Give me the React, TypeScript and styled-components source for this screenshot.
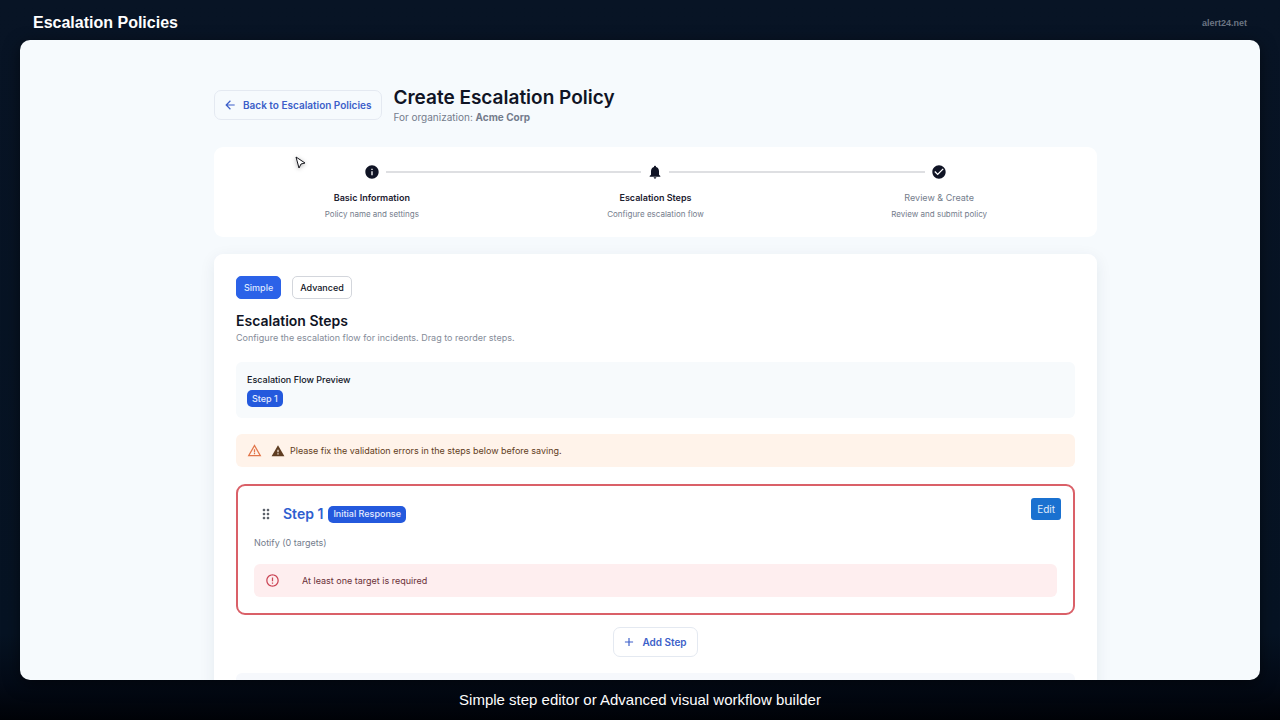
import React from 'react';
import styled, { createGlobalStyle } from 'styled-components';
import {
  MdAdd,
  MdArrowBack,
  MdCheckCircle,
  MdDragIndicator,
  MdErrorOutline,
  MdInfo,
  MdNotifications,
  MdWarning,
  MdWarningAmber,
} from 'react-icons/md';

const GlobalStyle = createGlobalStyle`
  *, *::before, *::after { box-sizing: border-box; }
  body {
    margin: 0;
    background: #061121;
    font-family: Inter, 'Liberation Sans', sans-serif;
    color: #101425;
  }
  h1, h2, h3, p, ol { margin: 0; padding: 0; }
  button { font-family: inherit; cursor: pointer; }
  svg { display: block; flex: none; }
`;

const Shell = styled.div`
  height: 100vh;
  display: flex;
  flex-direction: column;
  padding: 0 20px;
  background: linear-gradient(180deg, #081425 0%, #061323 88%, #030a16 95%, #000207 100%);
  font-family: 'Liberation Sans', Arial, sans-serif;
`;

const TopBar = styled.header`
  flex: none;
  height: 40px;
  padding: 5px 13px 0;
  display: flex;
  align-items: center;
  justify-content: space-between;
`;

const SceneTitle = styled.h1`
  font-size: 16px;
  line-height: 20px;
  font-weight: 700;
  color: #fff;
`;

const SiteLink = styled.a`
  font-size: 9px;
  line-height: 12px;
  font-weight: 700;
  color: #6b7482;
  text-decoration: none;
`;

const Caption = styled.footer`
  flex: none;
  height: 40px;
  display: flex;
  align-items: center;
  justify-content: center;
  font-size: 15px;
  line-height: 20px;
  color: #fff;
`;

const Viewport = styled.main`
  position: relative;
  flex: 1;
  min-height: 0;
  overflow: hidden;
  padding: 45px 16px 0 47px;
  border-radius: 10px;
  background: #f6fafd;
  box-shadow: 0 4px 16px rgba(0, 0, 0, 0.5);
  font-family: Inter, 'Liberation Sans', sans-serif;
`;

const Column = styled.div`
  max-width: 883px;
  margin: 0 auto;
`;

const PageHeader = styled.div`
  display: flex;
  align-items: center;
  gap: 11px;
  margin-bottom: 23px;
`;

const OutlineButton = styled.button`
  display: flex;
  align-items: center;
  gap: 6px;
  height: 30px;
  padding: 0 10px 0 8px;
  border: 1px solid #e4e9f1;
  border-radius: 7px;
  background: transparent;
  color: #3c5fc9;
  font-size: 10px;
  line-height: 16px;
  font-weight: 600;
`;

const PageTitle = styled.h2`
  font-size: 19px;
  line-height: 25px;
  font-weight: 600;
`;

const Organization = styled.p`
  font-size: 10px;
  line-height: 14px;
  color: #747c8c;
`;

const StepperCard = styled.ol`
  display: grid;
  grid-template-columns: repeat(3, 1fr);
  height: 90px;
  padding: 17px 16px 15px;
  margin-bottom: 17px;
  border-radius: 9px;
  background: #fff;
  list-style: none;
`;

const StepItem = styled.li<{ $pending?: boolean }>`
  display: grid;
  grid-template-columns: 1fr 16px 1fr;
  grid-template-rows: 16px 20px 12px;
  column-gap: 6px;
  row-gap: 4px;
  align-items: center;
  justify-items: center;
  text-align: center;
  color: ${(p) => (p.$pending ? '#747c8c' : '#1d2130')};
  font-weight: ${(p) => (p.$pending ? 400 : 600)};
`;

const Connector = styled.span<{ $hidden?: boolean }>`
  width: 100%;
  height: 2px;
  background: ${(p) => (p.$hidden ? 'transparent' : '#dedfe2')};
`;

const StepIcon = styled.span`
  color: #101425;
`;

const StepLabel = styled.span`
  grid-column: 1 / -1;
  align-self: end;
  font-size: 9px;
  line-height: 12px;
`;

const StepHint = styled.span`
  grid-column: 1 / -1;
  font-size: 8px;
  line-height: 12px;
  font-weight: 400;
  color: #747c8c;
`;

const EditorCard = styled.section`
  padding: 22px 22px 40px;
  border-radius: 9px;
  background: #fff;
  box-shadow: 0 4px 16px rgba(30, 50, 80, 0.08);
`;

const ModeSwitch = styled.div`
  display: flex;
  gap: 11px;
  margin-bottom: 12px;
`;

const ModeButton = styled.button<{ $active?: boolean }>`
  height: 23px;
  padding: 0 7px;
  border: 1px solid ${(p) => (p.$active ? '#2b62e8' : '#d3d6dc')};
  border-radius: 5px;
  background: ${(p) => (p.$active ? '#2b62e8' : '#fff')};
  color: ${(p) => (p.$active ? '#dfe8ff' : '#101425')};
  font-size: 9px;
  line-height: 12px;
  font-weight: 500;
`;

const SectionTitle = styled.h3`
  font-size: 14px;
  line-height: 19px;
  font-weight: 600;
`;

const SectionHint = styled.p`
  margin-bottom: 16px;
  font-size: 9px;
  line-height: 16px;
  color: #858c99;
`;

const Preview = styled.div`
  display: flex;
  flex-direction: column;
  align-items: flex-start;
  gap: 4px;
  height: 56px;
  margin-bottom: 16px;
  padding: 11px;
  border-radius: 6px;
  background: #f7fafc;
`;

const PreviewTitle = styled.p`
  font-size: 9px;
  line-height: 13px;
  font-weight: 500;
`;

const Chip = styled.span`
  display: inline-flex;
  align-items: center;
  height: 17px;
  padding: 0 5px;
  border-radius: 5px;
  background: #2459dd;
  color: #e3ebff;
  font-size: 9px;
  line-height: 12px;
  font-weight: 500;
`;

const Alert = styled.div<{ $tone: 'warning' | 'error' }>`
  display: flex;
  align-items: center;
  gap: ${(p) => (p.$tone === 'warning' ? 9 : 22)}px;
  height: 33px;
  padding: 0 11px;
  border-radius: 6px;
  background: ${(p) => (p.$tone === 'warning' ? '#fff3ea' : '#feeeef')};
  color: ${(p) => (p.$tone === 'warning' ? '#5f3d22' : '#6a3038')};
  font-size: 9px;
  line-height: 12px;

  & > svg { color: ${(p) => (p.$tone === 'warning' ? '#e2764a' : '#cb4656')}; }
`;

const AlertText = styled.span`
  display: flex;
  align-items: center;
  gap: 5px;
`;

const StepCard = styled.article`
  height: 131px;
  margin: 17px 0 12px;
  padding: 12px 16px 16px;
  border: 2px solid #da6068;
  border-radius: 9px;
`;

const StepHeader = styled.div`
  display: flex;
  align-items: flex-start;
  justify-content: space-between;
  margin-right: -4px;
`;

const StepHeading = styled.div`
  display: flex;
  align-items: center;
  height: 32px;
  padding-left: 4px;
  color: #5a5f68;
`;

const StepName = styled.h3`
  margin: 0 5px 0 9px;
  color: #2f5fd0;
  font-size: 14px;
  line-height: 18px;
  font-weight: 600;
`;

const EditButton = styled.button`
  height: 22px;
  padding: 0 6px;
  border: 0;
  border-radius: 3px;
  background: #1a71d0;
  color: #e0edfc;
  font-size: 10px;
  line-height: 14px;
`;

const StepMeta = styled.p`
  margin: 6px 0 15px;
  font-size: 9px;
  line-height: 13px;
  color: #747c8c;
`;

const AddRow = styled.div`
  display: flex;
  justify-content: center;
  margin-bottom: 16px;
`;

const ActionBar = styled.div`
  height: 40px;
  border-radius: 6px;
  background: #f6f8fc;
`;

const Pointer = styled.svg`
  position: absolute;
  left: 274px;
  top: 115px;
  filter: drop-shadow(0 1px 2px rgba(0, 0, 0, 0.3));
`;

const steps = [
  { label: 'Basic Information', hint: 'Policy name and settings', Icon: MdInfo },
  { label: 'Escalation Steps', hint: 'Configure escalation flow', Icon: MdNotifications },
  { label: 'Review & Create', hint: 'Review and submit policy', Icon: MdCheckCircle, pending: true },
];

export default function App() {
  return (
    <>
      <GlobalStyle />
      <Shell>
        <TopBar>
          <SceneTitle>Escalation Policies</SceneTitle>
          <SiteLink href="#">alert24.net</SiteLink>
        </TopBar>
        <Viewport>
          <Column>
            <PageHeader>
              <OutlineButton type="button">
                <MdArrowBack size={14} />
                Back to Escalation Policies
              </OutlineButton>
              <div>
                <PageTitle>Create Escalation Policy</PageTitle>
                <Organization>
                  For organization: <strong>Acme Corp</strong>
                </Organization>
              </div>
            </PageHeader>

            <StepperCard>
              {steps.map(({ label, hint, Icon, pending }, i) => (
                <StepItem key={label} $pending={pending}>
                  <Connector $hidden={i === 0} />
                  <StepIcon><Icon size={16} /></StepIcon>
                  <Connector $hidden={i === steps.length - 1} />
                  <StepLabel>{label}</StepLabel>
                  <StepHint>{hint}</StepHint>
                </StepItem>
              ))}
            </StepperCard>

            <EditorCard>
              <ModeSwitch>
                <ModeButton type="button" $active>Simple</ModeButton>
                <ModeButton type="button">Advanced</ModeButton>
              </ModeSwitch>
              <SectionTitle>Escalation Steps</SectionTitle>
              <SectionHint>
                Configure the escalation flow for incidents. Drag to reorder steps.
              </SectionHint>

              <Preview>
                <PreviewTitle>Escalation Flow Preview</PreviewTitle>
                <Chip>Step 1</Chip>
              </Preview>

              <Alert $tone="warning" role="alert">
                <MdWarningAmber size={15} />
                <AlertText>
                  <MdWarning size={14} />
                  Please fix the validation errors in the steps below before saving.
                </AlertText>
              </Alert>

              <StepCard>
                <StepHeader>
                  <StepHeading>
                    <MdDragIndicator size={16} />
                    <StepName>Step 1</StepName>
                    <Chip>Initial Response</Chip>
                  </StepHeading>
                  <EditButton type="button">Edit</EditButton>
                </StepHeader>
                <StepMeta>Notify (0 targets)</StepMeta>
                <Alert $tone="error" role="alert">
                  <MdErrorOutline size={15} />
                  At least one target is required
                </Alert>
              </StepCard>

              <AddRow>
                <OutlineButton type="button">
                  <MdAdd size={14} />
                  Add Step
                </OutlineButton>
              </AddRow>
              <ActionBar />
            </EditorCard>
          </Column>
          <Pointer width="14" height="16" viewBox="0 0 14 16" aria-hidden="true">
            <path
              d="M2 2 L11 8 L7 9 L5 13 Z"
              fill="#fff"
              stroke="#15161c"
              strokeWidth="1"
              strokeLinejoin="round"
            />
          </Pointer>
        </Viewport>
        <Caption>Simple step editor or Advanced visual workflow builder</Caption>
      </Shell>
    </>
  );
}
